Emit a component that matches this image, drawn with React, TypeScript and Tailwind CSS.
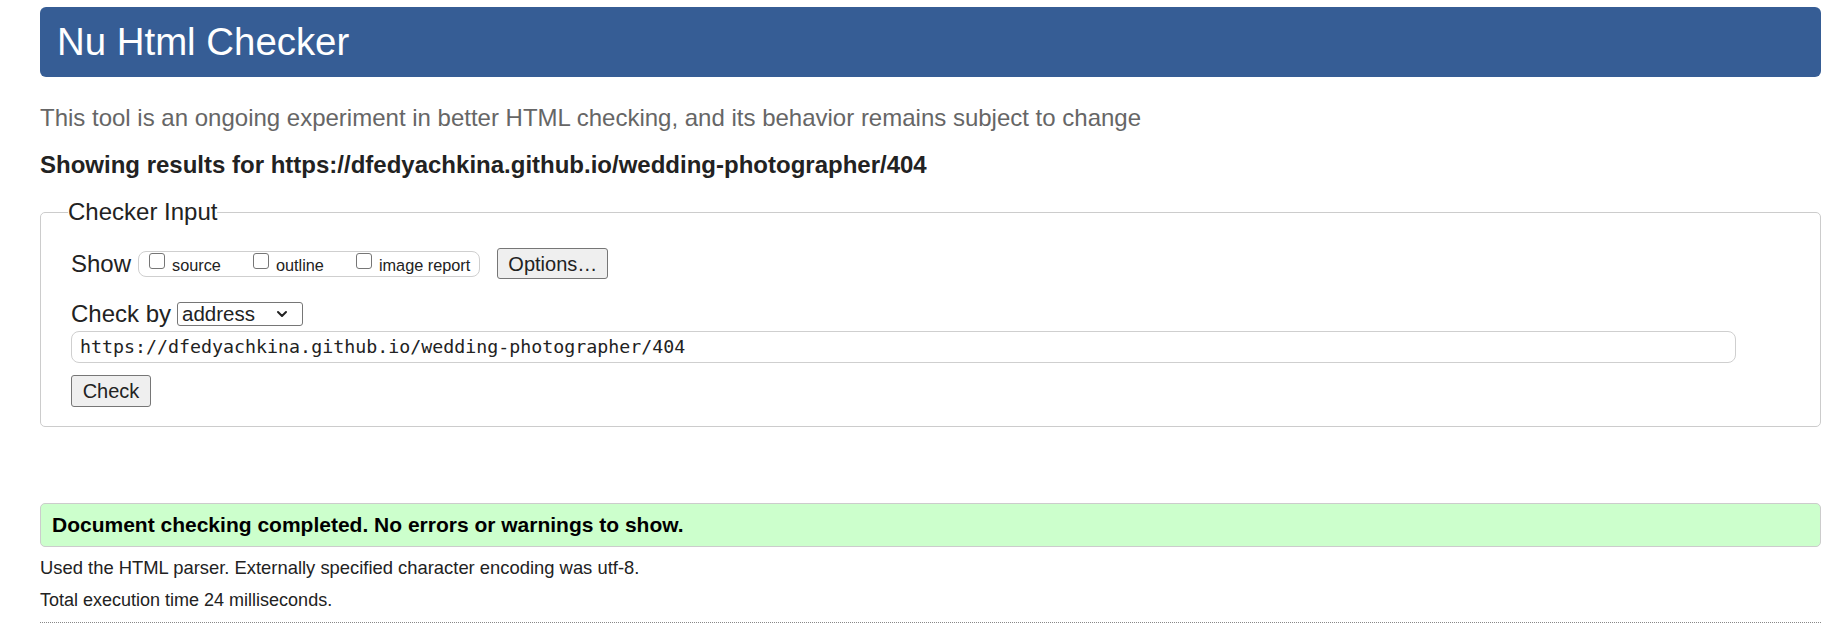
import { ChevronDown } from "lucide-react";

function Box({ label }: { label: string }) {
  return (
    <label className="flex items-start gap-[7px]">
      <span className="mt-[1px] h-[16px] w-[16px] rounded-[3px] border border-[#767676] bg-white" />
      <span className="mt-[4px] text-[16.3px] leading-[18px]">{label}</span>
    </label>
  );
}

export default function App() {
  return (
    <div className="min-h-[630px] bg-white pl-[40px] pr-[13px] pt-[7px] text-[20px] text-[#222] font-['Liberation_Sans',Arial,sans-serif]">
      <h1 className="flex h-[70px] items-center rounded-[6px] bg-[#365d95] px-[17px] text-[38.4px] text-white">
        Nu Html Checker
      </h1>

      <p className="mt-[27px] text-[24px] leading-[28px] text-[#666]">
        This tool is an ongoing experiment in better HTML checking, and its behavior remains subject to change
      </p>
      <p className="mt-[19px] text-[24px] font-bold leading-[28px]">
        Showing results for https://dfedyachkina.github.io/wedding-photographer/404
      </p>

      <fieldset className="mt-[19px] rounded-[5px] border border-[#cccccc] px-[30px] pb-[19px]">
        <legend className="-ml-[3px] px-0 text-[24px] leading-[28px]">Checker Input</legend>

        <div className="mt-[22px] flex h-[31px] items-center">
          <span className="text-[24px] leading-[28px]">Show</span>
          <div className="ml-[7px] flex h-[26px] items-start gap-[32px] rounded-[8px] border border-[#cfcfcf] pl-[10px] pr-[9px]">
            <Box label="source" />
            <Box label="outline" />
            <Box label="image report" />
          </div>
          <button className="ml-[17px] h-[31px] w-[111px] rounded-[3px] border border-[#767676] bg-[#efefef] text-[20px] leading-[24px]">
            Options…
          </button>
        </div>

        <div className="mt-[23px] flex h-[24px] items-center">
          <span className="text-[24px] leading-[28px]">Check by</span>
          <div className="ml-[6px] flex h-[24px] w-[126px] items-center justify-between rounded-[3px] border border-[#767676] bg-white pl-[4px] pr-[12px]">
            <span className="text-[20.5px] leading-[22px]">address</span>
            <ChevronDown size={16} strokeWidth={3} />
          </div>
        </div>

        <div className="mt-[5px] flex h-[32px] w-[1665px] items-center rounded-[8px] border border-[#cfcfcf] pl-[8px] font-['DejaVu_Sans_Mono',monospace] text-[18.3px]">
          https://dfedyachkina.github.io/wedding-photographer/404
        </div>

        <button className="mt-[12px] h-[32px] w-[80px] rounded-[3px] border border-[#767676] bg-[#efefef] text-[20px] leading-[24px]">
          Check
        </button>
      </fieldset>

      <div className="mt-[76px] flex h-[44px] items-center rounded-[5px] border border-[#cccccc] bg-[#ccffcc] pl-[11px] text-[21px] font-bold text-black">
        Document checking completed. No errors or warnings to show.
      </div>
      <p className="mt-[11px] text-[18.4px] leading-[20px]">
        Used the HTML parser. Externally specified character encoding was utf-8.
      </p>
      <p className="mt-[12px] text-[18px] leading-[20px]">Total execution time 24 milliseconds.</p>
      <div className="mt-[12px] border-t border-dotted border-[#888]" />
    </div>
  );
}
